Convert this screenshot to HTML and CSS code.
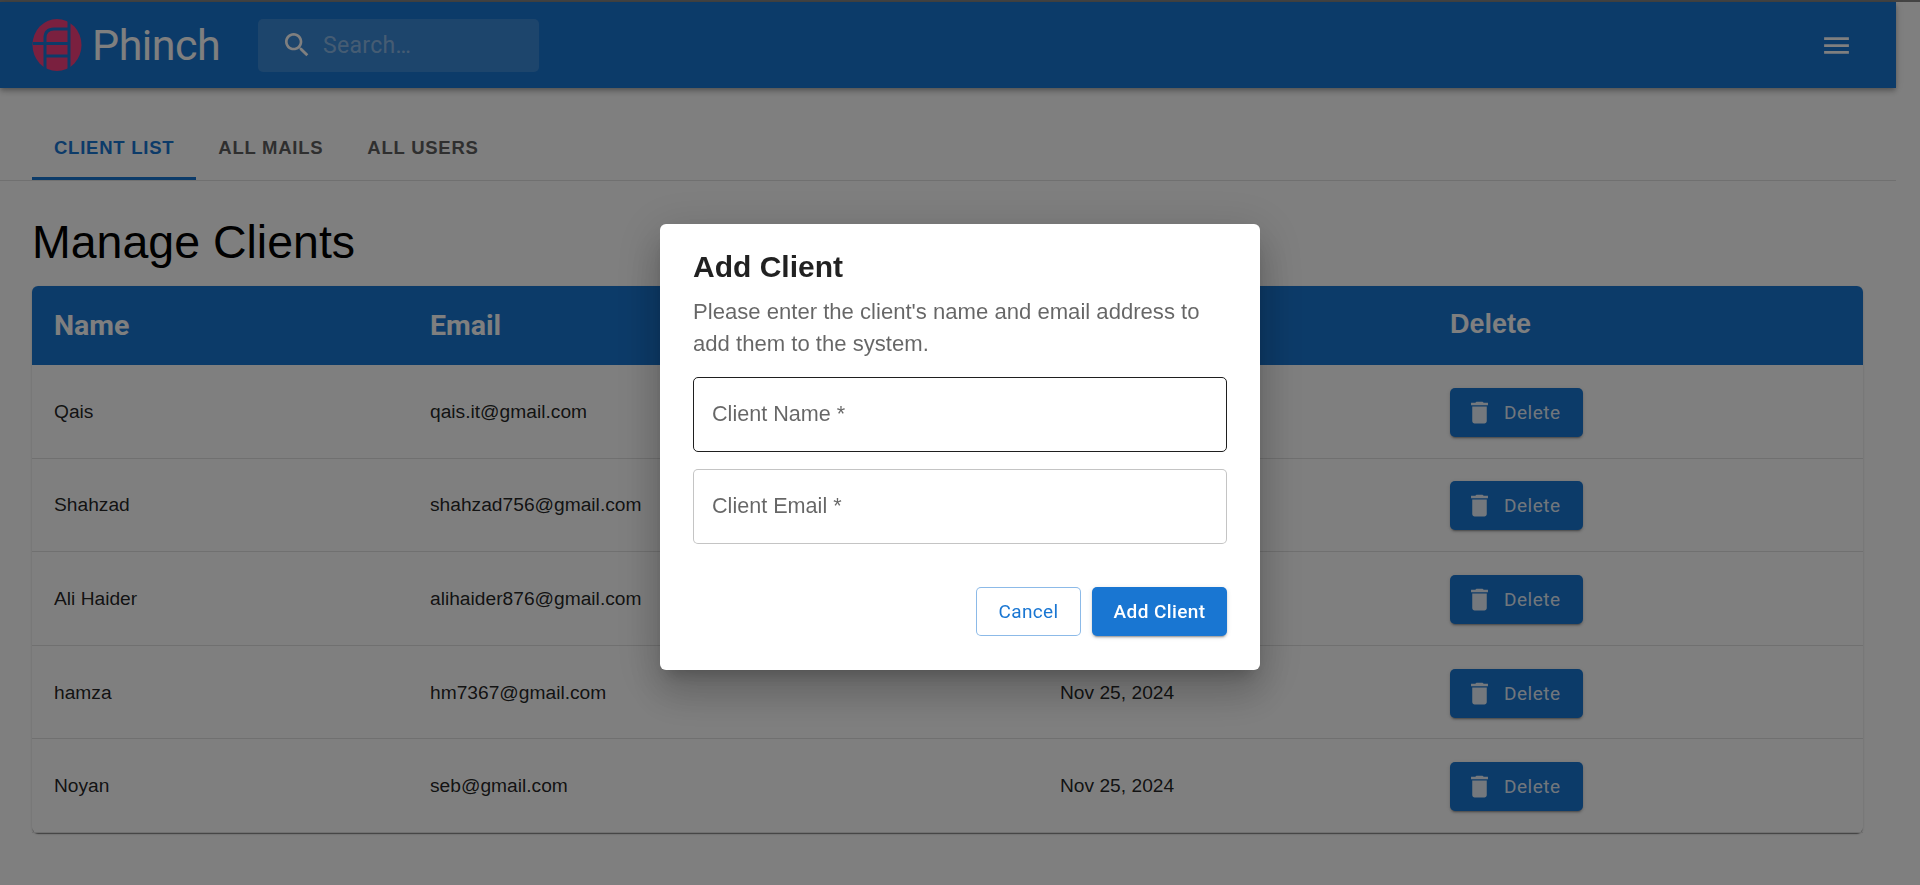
FILE: index.html
```html
<!DOCTYPE html>
<html lang="en">
<head>
    <meta charset="UTF-8">
    <meta name="viewport" content="width=device-width, initial-scale=1.0">
    <title>Phinch - Manage Clients</title>
    <link rel="stylesheet" href="styles.css">
</head>
<body>
    <div class="topline"></div>
    <div class="page">
        <header class="appbar">
            <div class="brand">
                <svg class="brand-mark" viewBox="0 0 50 54" width="50" height="54">
                    <ellipse cx="25" cy="27" rx="24.5" ry="26" fill="#f4407f"/>
                    <path d="M1 25.5H37M13 52V20Q13 11 22 11H37M13 38H37M37 0V54" fill="none" stroke="#1976d2" stroke-width="3"/>
                </svg>
                <span class="brand-name">Phinch</span>
            </div>
            <div class="search">
                <svg class="search-icon" viewBox="0 0 24 24" width="32" height="32"><path d="M15.5 14h-.79l-.28-.27C15.41 12.59 16 11.11 16 9.5 16 5.91 13.09 3 9.5 3S3 5.91 3 9.5 5.91 16 9.5 16c1.61 0 3.09-.59 4.23-1.57l.27.28v.79l5 4.99L20.49 19zm-6 0C7.01 14 5 11.99 5 9.5S7.01 5 9.5 5 14 7.01 14 9.5 11.99 14 9.5 14" fill="#fff"/></svg>
                <span class="search-text">Search…</span>
            </div>
            <svg class="menu-icon" viewBox="0 0 24 24" width="33" height="33"><path d="M3 18h18v-2H3zm0-5h18v-2H3zm0-7v2h18V6z" fill="#fff"/></svg>
        </header>

        <nav class="tabs">
            <a class="tab active">Client List</a>
            <a class="tab">All Mails</a>
            <a class="tab">All Users</a>
        </nav>

        <main class="content">
            <h1>Manage Clients</h1>
            <table class="clients">
                <colgroup>
                    <col class="col-name">
                    <col class="col-email">
                    <col class="col-date">
                    <col class="col-action">
                </colgroup>
                <thead>
                    <tr>
                        <th class="th-roboto">Name</th>
                        <th class="th-roboto">Email</th>
                        <th></th>
                        <th>Delete</th>
                    </tr>
                </thead>
                <tbody>
                    <tr>
                        <td>Qais</td>
                        <td>qais.it@gmail.com</td>
                        <td></td>
                        <td><button class="btn-delete" type="button"><svg viewBox="0 0 24 24" width="29" height="29"><path d="M6 19c0 1.1.9 2 2 2h8c1.1 0 2-.9 2-2V7H6zM19 4h-3.5l-1-1h-5l-1 1H5v2h14z" fill="currentColor"/></svg>Delete</button></td>
                    </tr>
                    <tr>
                        <td>Shahzad</td>
                        <td>shahzad756@gmail.com</td>
                        <td></td>
                        <td><button class="btn-delete" type="button"><svg viewBox="0 0 24 24" width="29" height="29"><path d="M6 19c0 1.1.9 2 2 2h8c1.1 0 2-.9 2-2V7H6zM19 4h-3.5l-1-1h-5l-1 1H5v2h14z" fill="currentColor"/></svg>Delete</button></td>
                    </tr>
                    <tr>
                        <td>Ali Haider</td>
                        <td>alihaider876@gmail.com</td>
                        <td></td>
                        <td><button class="btn-delete" type="button"><svg viewBox="0 0 24 24" width="29" height="29"><path d="M6 19c0 1.1.9 2 2 2h8c1.1 0 2-.9 2-2V7H6zM19 4h-3.5l-1-1h-5l-1 1H5v2h14z" fill="currentColor"/></svg>Delete</button></td>
                    </tr>
                    <tr>
                        <td>hamza</td>
                        <td>hm7367@gmail.com</td>
                        <td>Nov 25, 2024</td>
                        <td><button class="btn-delete" type="button"><svg viewBox="0 0 24 24" width="29" height="29"><path d="M6 19c0 1.1.9 2 2 2h8c1.1 0 2-.9 2-2V7H6zM19 4h-3.5l-1-1h-5l-1 1H5v2h14z" fill="currentColor"/></svg>Delete</button></td>
                    </tr>
                    <tr>
                        <td>Noyan</td>
                        <td>seb@gmail.com</td>
                        <td>Nov 25, 2024</td>
                        <td><button class="btn-delete" type="button"><svg viewBox="0 0 24 24" width="29" height="29"><path d="M6 19c0 1.1.9 2 2 2h8c1.1 0 2-.9 2-2V7H6zM19 4h-3.5l-1-1h-5l-1 1H5v2h14z" fill="currentColor"/></svg>Delete</button></td>
                    </tr>
                </tbody>
            </table>
        </main>
    </div>

    <div class="backdrop">
        <form class="dialog">
            <h2>Add Client</h2>
            <p>Please enter the client's name and email address to add them to the system.</p>
            <div class="field focused">
                <label for="clientName">Client Name *</label>
                <input type="text" id="clientName">
            </div>
            <div class="field">
                <label for="clientEmail">Client Email *</label>
                <input type="email" id="clientEmail">
            </div>
            <div class="actions">
                <button class="btn-cancel" type="button">Cancel</button>
                <button class="btn-add" type="button">Add Client</button>
            </div>
        </form>
    </div>
</body>
</html>
```

FILE: styles.css
```css
html, body {
    height: 100%;
}
body {
    margin: 0;
    overflow: hidden;
    background-color: #fff;
    font-family: "Liberation Sans", Arial, sans-serif;
    color: #000;
}
.topline {
    height: 2px;
    background-color: #888;
}
.page {
    width: 1896px;
}

/* app bar */
.appbar {
    height: 86px;
    display: flex;
    align-items: center;
    padding: 0 43px 0 32px;
    box-sizing: border-box;
    background-color: #1976d2;
    box-shadow: 0 2px 4px -1px rgba(0,0,0,.2), 0 4px 5px 0 rgba(0,0,0,.14), 0 1px 10px 0 rgba(0,0,0,.12);
    position: relative;
}
.brand {
    display: flex;
    align-items: center;
    gap: 10px;
    width: 226px;
}
.brand-name {
    font-family: Roboto, sans-serif;
    font-size: 43px;
    letter-spacing: -.5px;
    color: #fff;
}
.search {
    width: 281px;
    height: 53px;
    display: flex;
    align-items: center;
    padding-left: 23px;
    box-sizing: border-box;
    gap: 10px;
    border-radius: 5px;
    background-color: rgba(255,255,255,.15);
}
.search-text {
    font-family: Roboto, sans-serif;
    font-size: 23px;
    letter-spacing: .3px;
    color: rgba(255,255,255,.42);
}
.menu-icon {
    margin-left: auto;
}

/* tabs */
.tabs {
    height: 93px;
    display: flex;
    align-items: flex-end;
    padding-left: 32px;
    border-bottom: 1px solid #e0e0e0;
    box-sizing: border-box;
}
.tab {
    height: 60px;
    display: flex;
    align-items: center;
    padding: 0 22px 2px;
    box-sizing: border-box;
    font-size: 18.5px;
    font-weight: bold;
    letter-spacing: .75px;
    text-transform: uppercase;
    color: #5f5f5f;
    border-bottom: 3px solid transparent;
}
.tab.active {
    color: #1976d2;
    border-bottom-color: #1976d2;
}

/* content */
.content {
    padding: 0 33px 0 32px;
}
h1 {
    margin: 0;
    height: 105px;
    line-height: 122px;
    font-size: 46.5px;
    font-weight: normal;
}
.clients {
    width: 1831px;
    table-layout: fixed;
    border-collapse: separate;
    border-spacing: 0;
    border-radius: 6px;
    box-shadow: 0 2px 1px -1px rgba(0,0,0,.35), 0 1px 1px 0 rgba(0,0,0,.14), 0 1px 3px 0 rgba(0,0,0,.12);
}
.col-name { width: 376px; }
.col-email { width: 630px; }
.col-date { width: 390px; }
.col-action { width: 435px; }
th {
    height: 79px;
    padding: 0 22px 2px;
    background-color: #1976d2;
    color: #fff;
    font-size: 27px;
    text-align: left;
    box-sizing: border-box;
}
th.th-roboto {
    font-family: Roboto, sans-serif;
    font-size: 28.5px;
    padding-bottom: 0;
}
th:first-child { border-top-left-radius: 6px; }
th:last-child { border-top-right-radius: 6px; }
td {
    height: 93.6px;
    padding: 1px 22px 0;
    box-sizing: border-box;
    font-size: 19.2px;
    color: rgba(0,0,0,.87);
    border-bottom: 1px solid #e0e0e0;
}
td:last-child {
    padding-top: 2px;
}
.btn-delete {
    width: 133px;
    height: 49px;
    display: flex;
    align-items: center;
    gap: 10px;
    padding: 0 0 0 15px;
    border: none;
    border-radius: 5px;
    background-color: #1976d2;
    color: rgba(255,255,255,.9);
    font-family: Roboto, sans-serif;
    font-size: 19px;
    letter-spacing: .5px;
    box-shadow: 0 3px 1px -2px rgba(0,0,0,.2), 0 2px 2px 0 rgba(0,0,0,.14), 0 1px 5px 0 rgba(0,0,0,.12);
}

/* modal */
.backdrop {
    position: fixed;
    inset: 0;
    display: flex;
    align-items: center;
    justify-content: center;
    padding-top: 9px;
    box-sizing: border-box;
    background-color: rgba(0,0,0,.5);
}
.dialog {
    width: 600px;
    height: 446px;
    padding: 25px 33px 0;
    box-sizing: border-box;
    border-radius: 6px;
    background-color: #fff;
    box-shadow: 0 11px 15px -7px rgba(0,0,0,.2), 0 24px 38px 3px rgba(0,0,0,.14), 0 9px 46px 8px rgba(0,0,0,.12);
}
.dialog h2 {
    margin: 0;
    font-size: 30px;
    line-height: 36px;
    color: rgba(0,0,0,.87);
}
.dialog p {
    margin: 11px 0 17px;
    font-size: 22.1px;
    line-height: 32px;
    color: rgba(0,0,0,.6);
}
.field {
    position: relative;
    height: 75px;
    margin-bottom: 17px;
}
.field input {
    width: 100%;
    height: 100%;
    box-sizing: border-box;
    border: 1px solid rgba(0,0,0,.23);
    border-radius: 5px;
    outline: none;
}
.field.focused input {
    border-color: #1f1f1f;
}
.field label {
    position: absolute;
    left: 19px;
    top: 24px;
    font-size: 21.6px;
    line-height: 26px;
    color: rgba(0,0,0,.6);
}
.actions {
    display: flex;
    justify-content: flex-end;
    align-items: center;
    gap: 11px;
    margin-top: 43px;
}
.actions button {
    height: 49px;
    border-radius: 5px;
    font-family: Roboto, sans-serif;
    font-size: 19px;
    letter-spacing: .4px;
}
.btn-cancel {
    width: 105px;
    border: 1px solid rgba(25,118,210,.5);
    background-color: #fff;
    color: #1976d2;
}
.btn-add {
    width: 135px;
    border: none;
    background-color: #1976d2;
    color: #fff;
    font-weight: 500;
    box-shadow: 0 3px 1px -2px rgba(0,0,0,.2), 0 2px 2px 0 rgba(0,0,0,.14), 0 1px 5px 0 rgba(0,0,0,.12);
}
```
